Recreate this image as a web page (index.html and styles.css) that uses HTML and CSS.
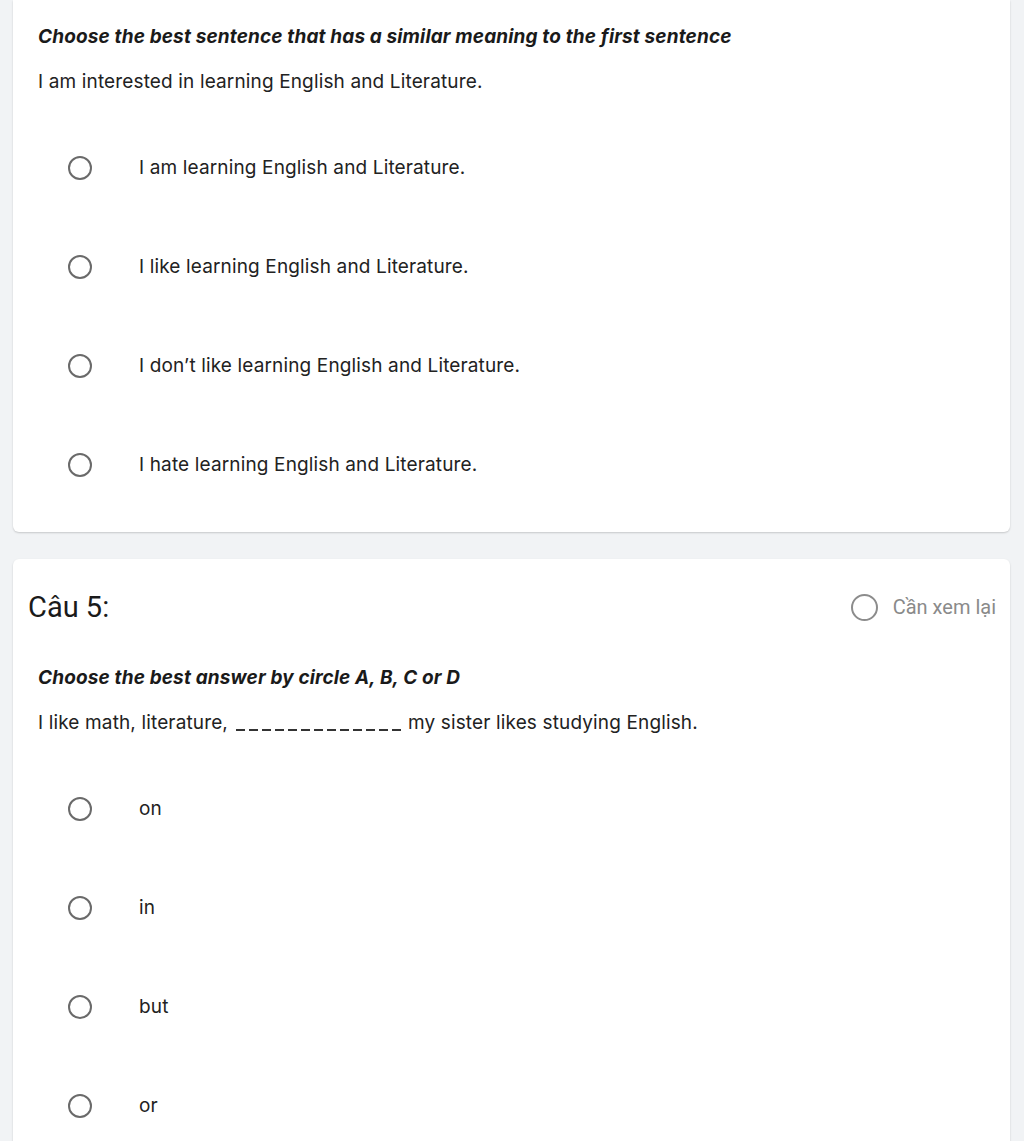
FILE: index.html
```
<!DOCTYPE html>
<html lang="vi">
<head>
<meta charset="utf-8">
<link rel="stylesheet" href="styles.css">
</head>
<body>
<div class="page">
  <section class="card card-first">
    <div class="body">
      <p class="title">Choose the best sentence that has a similar meaning to the first sentence</p>
      <p class="sentence">I am interested in learning English and Literature.</p>
      <ul class="options">
        <li class="option"><span class="radio"></span><span class="label">I am learning English and Literature.</span></li>
        <li class="option"><span class="radio"></span><span class="label">I like learning English and Literature.</span></li>
        <li class="option"><span class="radio"></span><span class="label">I don’t like learning English and Literature.</span></li>
        <li class="option"><span class="radio"></span><span class="label">I hate learning English and Literature.</span></li>
      </ul>
    </div>
  </section>
  <section class="card">
    <div class="head">
      <h2 class="qnum">Câu 5:</h2>
      <label class="review"><span class="radio radio-light"></span><span>Cần xem lại</span></label>
    </div>
    <div class="body">
      <p class="title">Choose the best answer by circle A, B, C or D</p>
      <p class="sentence">I like math, literature, <span class="blank" aria-label="blank"></span> my sister likes studying English.</p>
      <ul class="options">
        <li class="option"><span class="radio"></span><span class="label">on</span></li>
        <li class="option"><span class="radio"></span><span class="label">in</span></li>
        <li class="option"><span class="radio"></span><span class="label">but</span></li>
        <li class="option"><span class="radio"></span><span class="label">or</span></li>
      </ul>
    </div>
  </section>
</div>
</body>
</html>
```
FILE: styles.css
```
* { box-sizing: border-box; }
html, body { margin: 0; padding: 0; }
body {
  background: #f1f3f5;
  font-family: Inter, "Noto Sans", sans-serif;
  color: #222;
  height: 1141px;
  overflow: hidden;
}
.page {
  padding: 0 14px 0 13px;
  display: flex;
  flex-direction: column;
  gap: 27px;
}
.card {
  background: #fff;
  border-radius: 6px;
  box-shadow: 0 1px 2px rgba(0,0,0,0.18);
  padding-bottom: 18px;
}
.card-first {
  border-top-left-radius: 0;
  border-top-right-radius: 0;
  padding-top: 23px;
}
.head {
  display: flex;
  align-items: center;
  justify-content: space-between;
  padding: 31px 14px 0 15px;
  margin-bottom: 40px;
}
.qnum {
  margin: 0;
  font-family: Roboto, "Liberation Sans", sans-serif;
  font-weight: 400;
  font-size: 29px;
  line-height: 34px;
  color: #1a1a1a;
}
.review {
  display: flex;
  align-items: center;
  gap: 15px;
  font-family: Roboto, "Liberation Sans", sans-serif;
  font-size: 20px;
  color: #8a8a8a;
  line-height: 28px;
}
.body { padding: 0 25px; }
.title {
  margin: 0;
  font-size: 19px;
  line-height: 28px;
  font-weight: 700;
  font-style: italic;
  letter-spacing: 0.14px;
  color: #1a1a1a;
}
.sentence {
  margin: 17px 0 0;
  font-size: 19px;
  line-height: 28px;
  letter-spacing: 0.14px;
  color: #222;
}
.blank {
  display: inline-block;
  width: 169px;
  height: 2px;
  margin: 0 -3px 0 3px;
  vertical-align: -2px;
  background: repeating-linear-gradient(to right, #333 0 9px, transparent 9px 13px);
}
.options {
  list-style: none;
  margin: 22px 0 0;
  padding: 0;
}
.option {
  display: flex;
  align-items: center;
  height: 99px;
  padding-left: 30px;
}
.radio {
  width: 24px;
  height: 24px;
  border: 2.5px solid #6a6a6a;
  border-radius: 50%;
  flex: none;
}
.radio-light {
  width: 27px;
  height: 27px;
  border-color: #8c8c8c;
}
.label {
  margin-left: 47px;
  font-size: 19px;
  line-height: 28px;
  letter-spacing: 0.14px;
  color: #222;
}
```
